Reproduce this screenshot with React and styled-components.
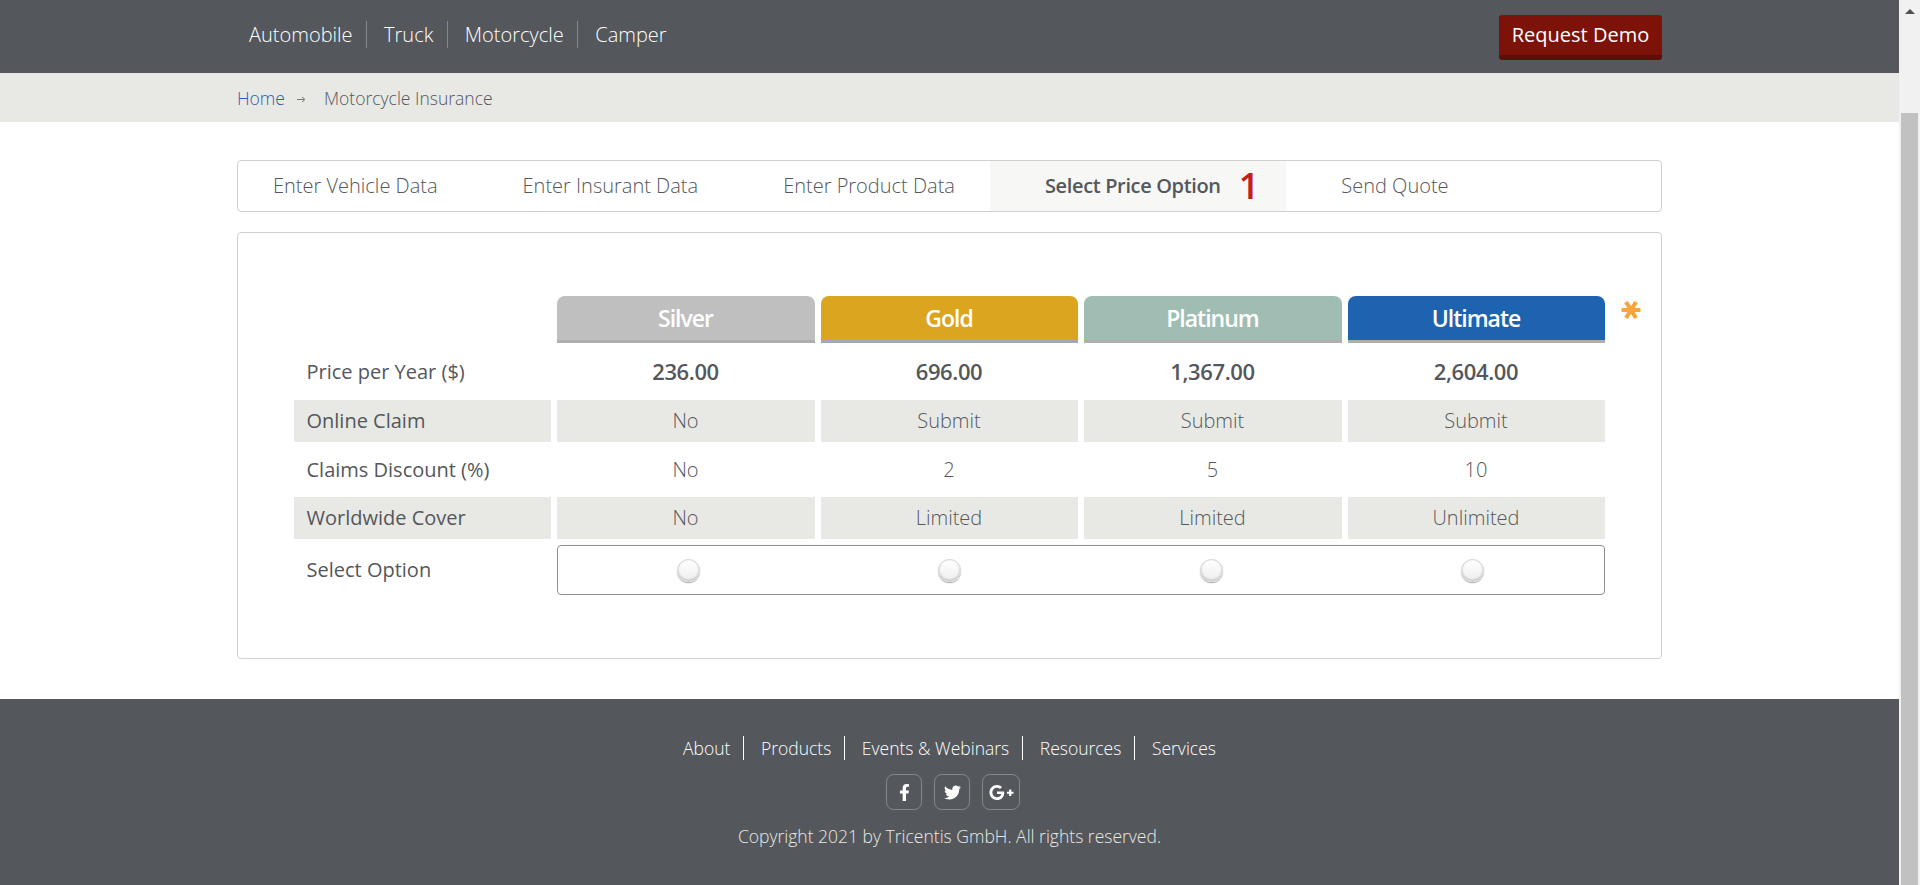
import React from "react";
import styled, { createGlobalStyle } from "styled-components";
import { FaFacebookF, FaTwitter, FaGooglePlusG } from "react-icons/fa";

const Global = createGlobalStyle`
  html, body { margin: 0; padding: 0; height: 885px; overflow: hidden; background: #fff; }
  body { font-family: "Open Sans", "Liberation Sans", sans-serif; color: #54575c; }
`;
const Shell = styled.div`display: flex; width: 1920px; height: 885px; overflow: hidden;`;
const Page = styled.div`flex: 0 0 1899px; display: flex; flex-direction: column;`;
const Scrollbar = styled.div`flex: 0 0 21px; background: #f1f1f1; display: flex; flex-direction: column; align-items: center;`;
const ScrollArrow = styled.div`
  margin-top: 9px; width: 0; height: 0;
  border-left: 5px solid transparent; border-right: 5px solid transparent; border-bottom: 5px solid #505050;
`;
const ScrollThumb = styled.div`margin-top: 99px; width: 17px; flex: 1; background: #c1c1c1;`;
const Wrap = styled.div`width: 1425px; margin-left: 237px;`;

const Header = styled.header`height: 73px; background: #54575c;`;
const HeaderInner = styled(Wrap)`display: flex; justify-content: space-between; align-items: flex-start;`;
const TopNav = styled.nav`display: flex; margin: 21px 0 0 12px;`;
const TopLink = styled.a`
  font-size: 20px; font-weight: 300; line-height: 27px; color: #fff; padding: 0 13.5px 0 0; margin-right: 17px;
  border-right: 1px solid #85888c;
  &:last-child { border-right: 0; }
`;
const Demo = styled.button`
  margin-top: 15px; width: 163px; height: 45px; padding: 0 0 1px; border: 0; border-radius: 3px;
  border-bottom: 5px solid #5c0f06; box-sizing: border-box; background: #7d1208; color: #fff;
  font: 400 20px/27px "Open Sans", sans-serif;
`;
const Crumbs = styled.div`height: 49px; background: #e8e9e4;`;
const CrumbInner = styled(Wrap)`display: flex; align-items: center; height: 49px; font-size: 17.5px; font-weight: 300;`;
const Home = styled.a`color: #1f62ac;`;
const Arrow = styled.svg`margin: 4px 18px 0 12px;`;
const Main = styled.main`flex: 1; display: flex; flex-direction: column;`;
const Tabs = styled(Wrap)`
  margin-top: 38px; height: 52px; box-sizing: border-box; border: 1.5px solid #d0d0d0; border-radius: 4px; display: flex;
`;
const Tab = styled.div`
  display: flex; align-items: center; font-size: 20px; font-weight: ${p => p.$active ? 600 : 300};
  padding: 0 ${p => p.$right}px 1px ${p => p.$left}px;
  background: ${p => p.$active ? "#f7f7f6" : "transparent"};
  margin-left: ${p => p.$gap || 0}px;
  letter-spacing: ${p => p.$active ? -0.35 : 0}px;
  white-space: nowrap;
`;
const Count = styled.span`font-size: 36px; font-weight: 600; color: #c4201a; margin-left: 18px; line-height: 30px; letter-spacing: 0;`;
const Card = styled(Wrap)`
  margin-top: 20px; height: 427px; box-sizing: border-box; border: 1.5px solid #d0d0d0; border-radius: 4px;
  padding: 62.5px 0 0 55.5px; position: relative;
`;
const Grid = styled.div`
  display: grid; grid-template-columns: 257px 258px 257px 258px 257px; column-gap: 6px;
  grid-template-rows: 47px 47px 42px 45px 42px 50px; row-gap: 5px;
`;
const Plan = styled.div`
  background: ${p => p.$bg}; color: #fff; font-size: 23px; font-weight: 600; letter-spacing: -1px;
  display: flex; align-items: center; justify-content: center;
  border-radius: 8px 8px 0 0; border-bottom: 3px solid ${p => p.$line}; box-sizing: border-box;
`;
const Label = styled.div`
  display: flex; align-items: center; padding: ${p => p.$drop ? 2 : 0}px 0 0 13px; font-size: 20px; font-weight: 400;
  background: ${p => p.$shade ? "#e8e9e4" : "transparent"}; color: #54575c; box-sizing: border-box;
`;
const Cell = styled.div`
  display: flex; align-items: center; justify-content: center; font-weight: ${p => p.$bold ? 600 : 300};
  font-size: ${p => p.$bold ? 22 : 20}px;
  letter-spacing: ${p => p.$bold ? -0.4 : 0}px;
  background: ${p => p.$shade ? "#e8e9e4" : "transparent"};
`;
const Empty = styled.div``;
const Options = styled.div`
  grid-column: 2 / span 4; border: 1px solid #8f8f8f; border-radius: 4px; display: grid;
  grid-template-columns: repeat(4, 1fr); align-items: center; justify-items: center; margin-top: 1px; height: 50px; box-sizing: border-box;
`;
const Radio = styled.span`
  width: 21px; height: 21px; margin-top: 1px; border-radius: 50%; border: 1px solid #d4d4d4; box-sizing: content-box;
  background: linear-gradient(#fff, #eeeeee); box-shadow: inset 0 -1px 2px #bbb, 0 1px 1px #aaa;
`;
const Star = styled.svg`position: absolute; left: 1383px; top: 67px;`;

const Footer = styled.footer`
  height: 186px; background: #54575c; color: #fff; display: flex; flex-direction: column; align-items: center; margin-top: 40px;
`;
const FootNav = styled.nav`display: flex; margin-top: 37px;`;
const FootLink = styled.a`
  font-size: 17.5px; font-weight: 300; line-height: 24px; color: #fff; padding-right: 12.5px; margin-right: 17px;
  border-right: 1px solid #fff;
  &:last-child { border-right: 0; padding-right: 0; margin-right: 0; }
`;
const Socials = styled.div`display: flex; gap: 12px; margin: 14px 0 0 7px;`;
const Social = styled.a`
  height: 36px; width: ${p => p.$w || 36}px; box-sizing: border-box; border: 1px solid #85888c; border-radius: 8px;
  display: flex; align-items: center; justify-content: center; color: #fff; font-size: ${p => p.$s || 17}px;
`;
const Copy = styled.div`margin-top: 14px; font-size: 17.5px; line-height: 24px; font-weight: 300; color: #e8e9e4;`;

const plans = [
  { n: "Silver", bg: "#bfbfbf", line: "#aeaeae" },
  { n: "Gold", bg: "#dba51f", line: "#a3a9b0" },
  { n: "Platinum", bg: "#9fbdb2", line: "#aeaeae" },
  { n: "Ultimate", bg: "#1e63b0", line: "#aeaeae" },
];
const rows = [
  { l: "Price per Year ($)", v: ["236.00", "696.00", "1,367.00", "2,604.00"], bold: true },
  { l: "Online Claim", v: ["No", "Submit", "Submit", "Submit"], shade: true },
  { l: "Claims Discount (%)", v: ["No", "2", "5", "10"] },
  { l: "Worldwide Cover", v: ["No", "Limited", "Limited", "Unlimited"], shade: true },
];

export default function App() {
  return (
    <Shell>
      <Global />
      <Page>
        <Header>
          <HeaderInner>
            <TopNav>
              {["Automobile", "Truck", "Motorcycle", "Camper"].map(t => <TopLink key={t}>{t}</TopLink>)}
            </TopNav>
            <Demo>Request Demo</Demo>
          </HeaderInner>
        </Header>
        <Crumbs>
          <CrumbInner>
            <Home>Home</Home>
            <Arrow width="9" height="7" viewBox="0 0 9 7"><path d="M0 3.5h7M5 1l3 2.5L5 6" fill="none" stroke="#777" strokeWidth="1" /></Arrow>
            <span>Motorcycle Insurance</span>
          </CrumbInner>
        </Crumbs>
        <Main>
          <Tabs>
            <Tab $left={35} $right={50}>Enter Vehicle Data</Tab>
            <Tab $left={35} $right={50}>Enter Insurant Data</Tab>
            <Tab $left={35} $right={35}>Enter Product Data</Tab>
            <Tab $active $left={55} $right={27}>Select Price Option<Count>1</Count></Tab>
            <Tab $left={0} $right={0} $gap={55}>Send Quote</Tab>
          </Tabs>
          <Card>
            <Grid>
              <Empty />
              {plans.map(p => <Plan key={p.n} $bg={p.bg} $line={p.line}>{p.n}</Plan>)}
              {rows.map(r => (
                <React.Fragment key={r.l}>
                  <Label $shade={r.shade}>{r.l}</Label>
                  {r.v.map((v, i) => <Cell key={i} $shade={r.shade} $bold={r.bold}>{v}</Cell>)}
                </React.Fragment>
              ))}
              <Label $drop>Select Option</Label>
              <Options>
                <Radio /><Radio /><Radio /><Radio />
              </Options>
            </Grid>
            <Star width="20" height="20" viewBox="0 0 20 20">
              <path d="M0.5 10h19M5 2l10 16M15 2L5 18" stroke="#f5a53a" strokeWidth="4.2" />
            </Star>
          </Card>
        </Main>
        <Footer>
          <FootNav>
            {["About", "Products", "Events & Webinars", "Resources", "Services"].map(t => <FootLink key={t}>{t}</FootLink>)}
          </FootNav>
          <Socials>
            <Social><FaFacebookF /></Social>
            <Social><FaTwitter /></Social>
            <Social $w={38} $s={25}><FaGooglePlusG /></Social>
          </Socials>
          <Copy>Copyright 2021 by Tricentis GmbH. All rights reserved.</Copy>
        </Footer>
      </Page>
      <Scrollbar>
        <ScrollArrow />
        <ScrollThumb />
      </Scrollbar>
    </Shell>
  );
}
